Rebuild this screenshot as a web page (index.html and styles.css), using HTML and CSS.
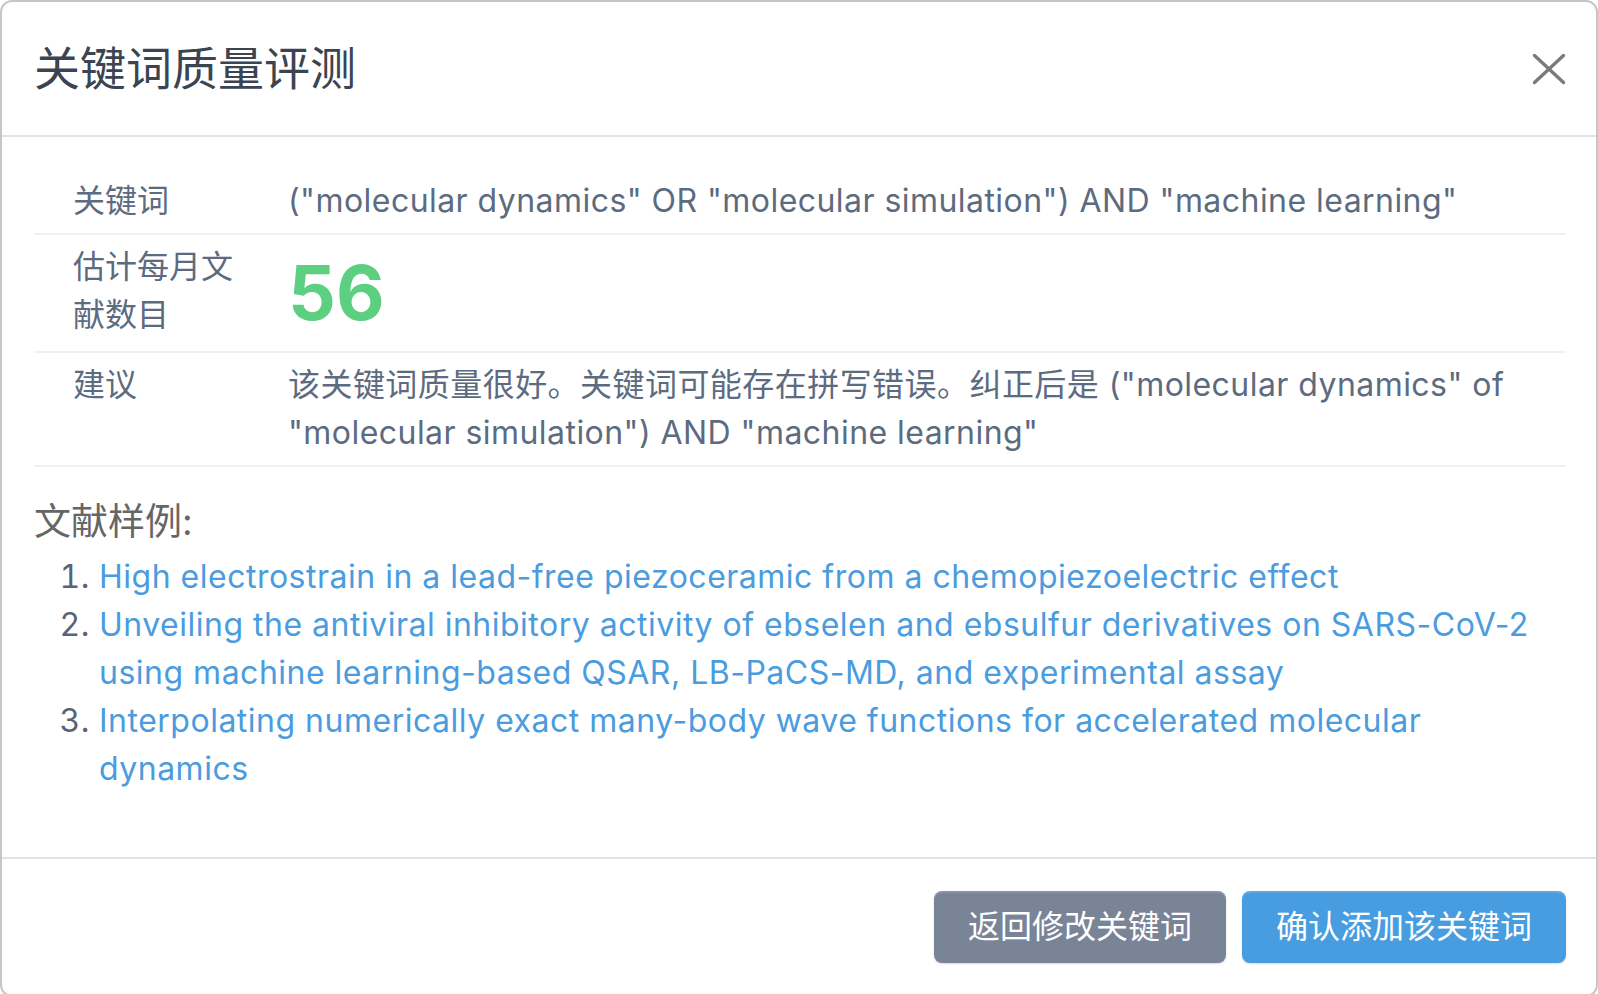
FILE: index.html
```html
<!DOCTYPE html>
<html lang="zh-CN">
<head>
<meta charset="utf-8">
<title>关键词质量评测</title>
<link rel="stylesheet" href="styles.css">
</head>
<body>
<div class="modal">
  <div class="modal-header">
    <h1 class="title">关键词质量评测</h1>
    <button class="close" type="button" aria-label="关闭">
      <svg width="34" height="32" viewBox="0 0 34 32"><path d="M2.5 2.5 L31.5 29.5 M31.5 2.5 L2.5 29.5" stroke="#7b7b7b" stroke-width="3.4" stroke-linecap="round" fill="none"/></svg>
    </button>
  </div>
  <div class="modal-body">
    <div class="info-table">
      <div class="info-row">
        <div class="info-label">关键词</div>
        <div class="info-value">("molecular dynamics" OR "molecular simulation") AND "machine learning"</div>
      </div>
      <div class="info-row">
        <div class="info-label">估计每月文献数目</div>
        <div class="info-value"><div class="count">56</div></div>
      </div>
      <div class="info-row">
        <div class="info-label">建议</div>
        <div class="info-value">该关键词质量很好。关键词可能存在拼写错误。纠正后是 ("molecular dynamics" of "molecular simulation") AND "machine learning"</div>
      </div>
    </div>
    <h2 class="samples-title">文献样例:</h2>
    <ol class="samples">
      <li><a href="#">High electrostrain in a lead-free piezoceramic from a chemopiezoelectric effect</a></li>
      <li><a href="#">Unveiling the antiviral inhibitory activity of ebselen and ebsulfur derivatives on SARS-CoV-2 using machine learning-based QSAR, LB-PaCS-MD, and experimental assay</a></li>
      <li><a href="#">Interpolating numerically exact many-body wave functions for accelerated molecular dynamics</a></li>
    </ol>
  </div>
  <div class="modal-footer">
    <button class="btn btn-secondary" type="button">返回修改关键词</button>
    <button class="btn btn-primary" type="button">确认添加该关键词</button>
  </div>
</div>
</body>
</html>
```

FILE: styles.css
```css
html, body {
  margin: 0;
  padding: 0;
  background: #ffffff;
}

body {
  font-family: "Inter", "Noto Sans CJK SC", sans-serif;
  overflow: hidden;
}

.modal {
  box-sizing: border-box;
  height: 997px;
  border: 2px solid #c6c6c6;
  border-radius: 12px;
  display: flex;
  flex-direction: column;
  overflow: hidden;
  background: #ffffff;
}

.modal-header {
  display: flex;
  align-items: center;
  padding: 32px 30px 32px 32px;
  border-bottom: 2px solid #dce3ec;
}

.title {
  margin: 0;
  font-size: 46px;
  line-height: 69px;
  font-weight: 400;
  color: #3b4451;
}

.close {
  margin-left: auto;
  border: 0;
  background: none;
  padding: 0;
  display: flex;
  cursor: pointer;
}

.modal-body {
  flex: 1;
  padding: 32px 30px 0 32px;
}

.info-row {
  display: flex;
  border-bottom: 2px solid #edf0f5;
  color: #5c6b7f;
  font-size: 32px;
  line-height: 48px;
}

.info-label {
  box-sizing: border-box;
  width: 230px;
  flex: none;
  padding: 8px 24px 8px 39px;
}

.info-value {
  flex: 1;
  padding: 8px 0 8px 24px;
  letter-spacing: 0.45px;
}

.count {
  font-size: 75px;
  line-height: 100px;
  font-weight: 700;
  letter-spacing: 0;
  color: #5ccf80;
}

.samples-title {
  margin: 28px 0 4px;
  font-size: 37px;
  line-height: 54px;
  font-weight: 400;
  color: #666666;
}

.samples {
  margin: 0;
  padding-left: 65px;
  font-size: 32px;
  line-height: 48px;
  letter-spacing: 0.5px;
  color: #5a6374;
}

.samples a {
  color: #4a9cdf;
  text-decoration: none;
}

.modal-footer {
  display: flex;
  justify-content: flex-end;
  gap: 16px;
  padding: 32px 30px 32px 32px;
  border-top: 2px solid #dce3ec;
}

.btn {
  font-family: inherit;
  font-size: 32px;
  line-height: 48px;
  padding: 12px 34px;
  border: 0;
  border-radius: 8px;
  color: #ffffff;
  box-shadow: inset 0 2px 0 rgba(255, 255, 255, 0.12), 0 1px 2px rgba(0, 0, 0, 0.15);
  cursor: pointer;
}

.btn-secondary {
  background: #798497;
}

.btn-primary {
  background: #479de0;
}
```
